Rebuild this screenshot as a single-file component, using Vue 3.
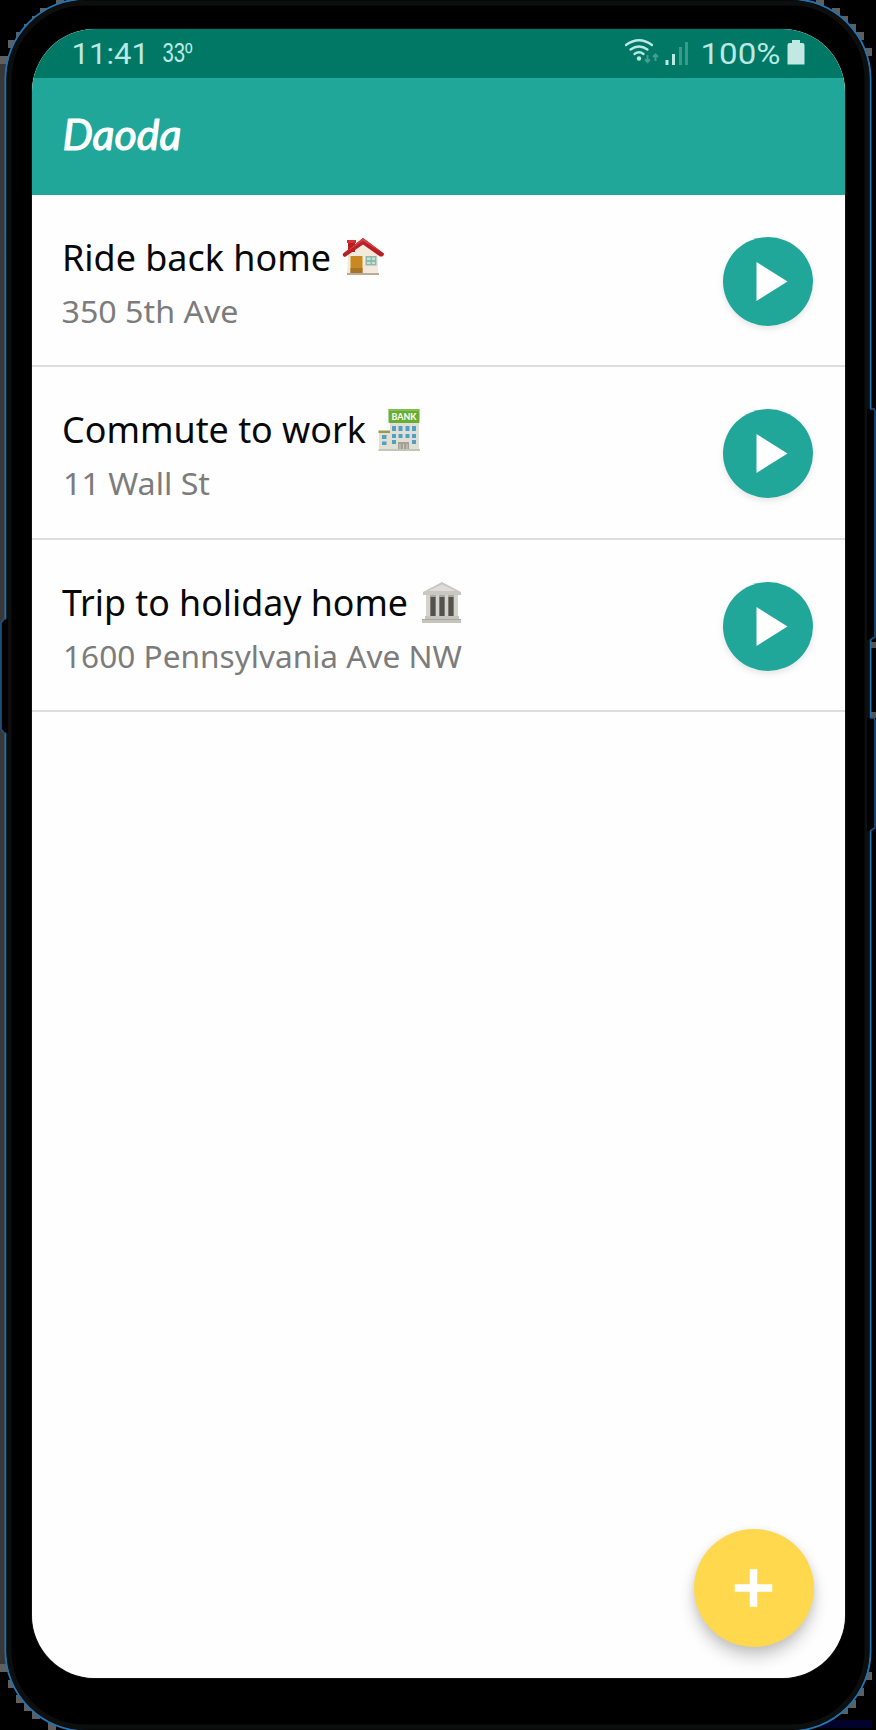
<script setup>
const trips = [
  { id: 'house', title: 'Ride back home', tw: 269, tx: 30, address: '350 5th Ave', aw: 177, ax: 29.5 },
  { id: 'bank', title: 'Commute to work', tw: 304, tx: 30, address: '11 Wall St', aw: 147, ax: 31 },
  { id: 'museum', title: 'Trip to holiday home', tw: 346, tx: 30, address: '1600 Pennsylvania Ave NW', aw: 399, ax: 31 },
]

const pixels = [
  [0, 56], [8, 40], [16, 32], [24, 24], [32, 16], [40, 8], [56, 0],
  [816, 0], [832, 8], [840, 16], [848, 24], [856, 32], [864, 48],
  [0, 1664], [8, 1680], [16, 1695], [24, 1703], [32, 1711], [48, 1723],
  [864, 1672], [856, 1688], [848, 1700], [840, 1706], [824, 1716],
]
</script>

<template>
  <div class="stage">
    <svg class="frame" viewBox="0 0 876 1730" width="876" height="1730">
      <rect width="876" height="1730" fill="#000" />
      <rect x="0" y="56" width="6" height="1612" fill="#383839" />
      <rect v-for="(p, i) in pixels" :key="i" :x="p[0]" :y="p[1]" width="8" height="8" fill="#5f5f5f" />
      <rect x="820" y="1720" width="52" height="8" fill="#02022c" />
      <rect x="871" y="642" width="5" height="6" fill="#555" />
      <rect x="871" y="712" width="5" height="6" fill="#555" />
      <rect x="5.5" y="-1" width="865" height="1732" rx="80" fill="#000" stroke="#2372ae" stroke-width="2" />
      <rect x="9" y="3" width="858" height="1724" rx="76" fill="none" stroke="#0d0f0f" stroke-width="5" />
      <path d="M8 619H4L1 623V729L4 733H8Z" fill="#000" />
      <path d="M6 619H4L1 623V729L4 733H6" fill="none" stroke="#195481" stroke-width="1.6" />
      <path d="M867 409H872L875 411V637L871 640H867ZM867 718H872L875 720V828L871 831H867Z" fill="#000" />
      <path d="M870 409H874L875 411V637L870 640M870 718H874L875 720V828L870 831" fill="none" stroke="#195481" stroke-width="1.6" />
    </svg>

    <main class="screen">
      <div class="status">
        <svg width="813" height="49" viewBox="0 0 813 49">
          <g class="status-text">
            <text x="39.5" y="35.2" font-size="29.5" textLength="77.5" lengthAdjust="spacingAndGlyphs">11:41</text>
            <text class="temp" x="130.5" y="32.5" font-size="27" textLength="30" lengthAdjust="spacingAndGlyphs">33º</text>
            <text x="668.5" y="35.2" font-size="30" textLength="80" lengthAdjust="spacingAndGlyphs">100%</text>
          </g>
          <g fill="none" stroke="#b9e9e2" stroke-width="2.3" stroke-linecap="round">
            <path d="M594 16Q607 6.500 620 16" />
            <path d="M598.500 20.500Q607 14.500 615.500 20.500" />
            <path d="M602.500 25Q607 21.500 611.500 25" />
          </g>
          <circle cx="607" cy="29.500" r="2.200" fill="#b9e9e2" />
          <path d="M615.500 26V33M613 30.500L615.500 33L618 30.500M623.500 32V25M621 28L623.500 25.500L626 28" fill="none" stroke="#439e90" stroke-width="2" />
          <path d="M633.500 31H636.500V36H633.500ZM640 25H643V36H640Z" fill="#b9e9e2" />
          <path d="M647 18H650V36H647ZM653 13H656V36H653Z" fill="#3c9a8b" />
          <path d="M760 11H768V14H770.500Q772.500 14 772.500 16V35.500H755.500V16Q755.500 14 757.500 14H760Z" fill="#c2e8e4" />
        </svg>
      </div>

      <header class="appbar">
        <svg width="200" height="90" viewBox="0 0 200 90">
          <text class="brand" x="30.500" y="72" font-size="42" textLength="119" lengthAdjust="spacingAndGlyphs">Daoda</text>
        </svg>
      </header>

      <ul class="list">
        <li v-for="t in trips" :key="t.id" class="row">
          <div class="info">
            <div class="line">
              <svg class="label" :width="t.tx + t.tw + 10" height="60" :viewBox="`0 0 ${t.tx + t.tw + 10} 60`">
                <text class="title" :x="t.tx" y="48.5" font-size="37" :textLength="t.tw" lengthAdjust="spacingAndGlyphs">{{ t.title }}</text>
              </svg>
              <svg v-if="t.id === 'house'" class="emoji house" width="44" height="44" viewBox="0 0 44 44">
                <path d="M7 17L22 5L37 17V37H6Z" fill="#f3eadb" />
                <path d="M6 36H38V38H6Z" fill="#b9ad9a" />
                <path d="M7 4H14V15H7Z" fill="#b91e22" />
                <path d="M6 3H15V6H6Z" fill="#d63235" />
                <path d="M22 1L43 16.500Q43 20 39 19.500L22 7.500L4 20Q1 19 2 16.500Z" fill="#b92026" />
                <path d="M22 1L42 16L22 4L3 16.500Z" fill="#d94043" />
                <rect x="9.500" y="19" width="12" height="17" fill="#c88922" />
                <path d="M9.500 31H21.500V36H9.500Z" fill="#a8742a" />
                <rect x="24.500" y="19" width="11" height="9.500" fill="#8fb9ac" />
                <path d="M26 20.500H29.500V23H26ZM31 20.500H34V23H31ZM26 25H29.500V27H26ZM31 25H34V27H31Z" fill="#c5e2d8" />
              </svg>
              <svg v-else-if="t.id === 'bank'" class="emoji bank" width="44" height="44" viewBox="0 0 44 44">
                <rect x="2" y="24" width="13" height="18" fill="#e3e0cf" />
                <rect x="1.500" y="22.500" width="12" height="2.500" fill="#9a9a4c" />
                <rect x="13" y="13" width="29" height="29" fill="#dedfd5" />
                <rect x="11.500" y="1" width="31" height="14" rx="1" fill="#69ad35" />
                <rect x="11.500" y="1" width="31" height="2" fill="#83bf4d" />
                <text x="14.500" y="11.500" class="bank-sign" font-size="9" textLength="25" lengthAdjust="spacingAndGlyphs">BANK</text>
                <path d="M15 18H19V23H15ZM21.500 18H25.500V23H21.500ZM28.500 18H32.500V23H28.500ZM35 18H39V23H35ZM15 26H19V30H15ZM21.500 26H25.500V30H21.500ZM28.500 26H32.500V30H28.500ZM35 26H39V30H35ZM15 32H19V36H15ZM35 32H39V36H35ZM5 27H9.500V31H5ZM5 33.500H9.500V37H5Z" fill="#519fc5" />
                <path d="M21 34H32V42H21Z" fill="#a5a096" />
                <path d="M23 36V42M26.500 36V42M30 36V42" stroke="#d0ccc1" />
                <path d="M1.500 41H43V43H1.500Z" fill="#c4c5b9" />
              </svg>
              <svg v-else class="emoji museum" width="44" height="44" viewBox="0 0 44 44">
                <path d="M2 10L21 0L40 10V13H2Z" fill="#c8c7c1" />
                <path d="M7 9L21 2.500L35 9Z" fill="#dddcd6" />
                <path d="M5 13H37V35H5Z" fill="#aaa9a2" />
                <path d="M9.500 15H14.500V34H9.500ZM18.500 15H23.500V34H18.500ZM27.500 15H32.500V34H27.500Z" fill="#53524d" />
                <path d="M5 13H9V35H5ZM15 13H18V35H15ZM24 13H27V35H24ZM33 13H37V35H33Z" fill="#d3d2cc" />
                <path d="M4 34H38V38H40V41H1V38H4Z" fill="#c5c4bd" />
                <path d="M1 37.500H40" stroke="#aaa9a2" />
              </svg>
            </div>
            <svg class="label" width="500" height="50" viewBox="0 0 500 50">
              <text class="address" :x="t.ax" y="41" font-size="31.5" :textLength="t.aw" lengthAdjust="spacingAndGlyphs">{{ t.address }}</text>
            </svg>
          </div>
          <button class="play" aria-label="Play">
            <svg width="90" height="89" viewBox="0 0 90 89"><path d="M33.500 25L64.500 44.500L33.500 64Z" fill="#fff" /></svg>
          </button>
        </li>
      </ul>

      <button class="fab" aria-label="Add">
        <svg width="120" height="118" viewBox="0 0 120 118"><path d="M59.500 44V74M44.500 59H74.500" stroke="#fff" stroke-width="7.500" stroke-linecap="square" /></svg>
      </button>
    </main>
  </div>
</template>

<style scoped>
.stage {
  position: relative;
  box-sizing: border-box;
  width: 876px;
  height: 1730px;
  padding: 29px 31px 52px 32px;
  overflow: hidden;
  background: #000;
}
svg { display: block; flex: none; }
.label { overflow: visible; }
.frame { position: absolute; inset: 0; }
.screen {
  position: relative;
  display: flex;
  flex-direction: column;
  width: 813px;
  height: 1649px;
  overflow: hidden;
  border-radius: 63px;
  background: #fefefe;
  box-shadow: 0 0 1px #aaa;
}
.status { height: 49px; background: #007866; }
.status-text { font-family: Roboto, sans-serif; fill: #b9e9e2; }
.temp { font-family: "Liberation Sans", sans-serif; font-weight: 300; }
.appbar { height: 117px; background: #20a79a; }
.brand { font-family: Lato, sans-serif; font-style: italic; font-weight: 400; fill: #fff; stroke: #fff; stroke-width: 1.1px; stroke-linejoin: round; }
.list { margin: -1px 0 0; padding: 0; list-style: none; }
.row {
  box-sizing: border-box;
  display: flex;
  justify-content: space-between;
  align-items: center;
  height: 172.6px;
  padding-right: 32px;
  border-bottom: 2px solid #dedede;
}
.row:first-child { margin-top: 1px; height: 172px; }
.info { display: flex; flex-direction: column; height: 116px; }
.line { display: flex; align-items: center; height: 60px; }
.title, .address { font-family: "Noto Sans", sans-serif; }
.title { fill: #080808; }
.address { fill: #7c7c7c; }
.house { margin-top: 13px; }
.bank { margin: 11px 0 0 1px; }
.museum { margin: 15px 0 0 3px; }
.bank-sign { font-family: Lato, sans-serif; font-weight: 900; fill: #f4fbe9; }
button { border: 0; padding: 0; border-radius: 50%; }
.play { width: 90px; height: 89px; margin-top: 3px; background: #20a79a; box-shadow: 0 3px 6px rgba(0, 0, 0, .1); }
.fab {
  position: absolute;
  left: 661.5px;
  top: 1500px;
  width: 120px;
  height: 118px;
  background: #ffd84d;
  box-shadow: 0 10px 16px rgba(0, 0, 0, .2), 0 2px 8px rgba(0, 0, 0, .08);
}
</style>

<style>
body { background: #000; }
</style>
